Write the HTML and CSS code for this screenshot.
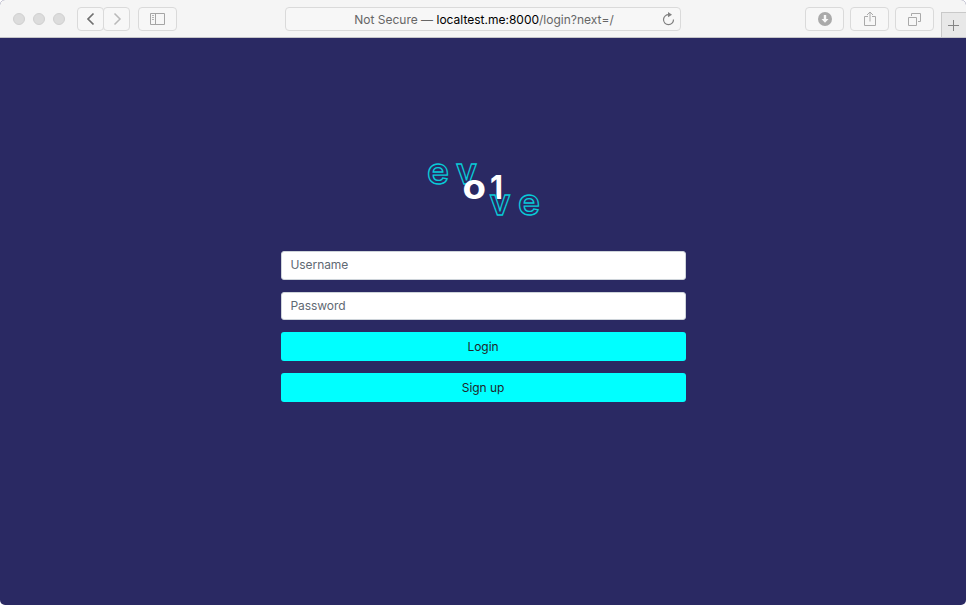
FILE: index.html
```
<!DOCTYPE html>
<html lang="en">
<head>
<meta charset="utf-8">
<title>Evolve</title>
<link rel="stylesheet" href="styles.css">
</head>
<body>
<div class="window">
  <header class="toolbar">
    <div class="lights"><i></i><i></i><i></i></div>
    <div class="nav">
      <span class="tool back"><svg width="10" height="14" viewBox="0 0 10 14"><path d="M7.500 1.500 2 7l5.500 5.500" fill="none" stroke="#707070" stroke-width="1.700"/></svg></span>
      <span class="tool forward"><svg width="10" height="14" viewBox="0 0 10 14"><path d="M2.500 1.500 8 7l-5.500 5.500" fill="none" stroke="#b9b9b9" stroke-width="1.500"/></svg></span>
    </div>
    <span class="tool sidebar"><svg width="15" height="12" viewBox="0 0 15 12" fill="none" stroke="#a5a5a5"><path d="M.5.5h14v11H.5zM5.500.5v11"/><path d="M2 2.500h2M2 4.500h2M2 6.500h2" stroke="#b5b5b5"/></svg></span>
    <div class="address">
      <span class="url">Not Secure — <b>localtest.me:8000</b>/login?next=/</span>
      <svg class="reload" width="13" height="14" viewBox="0 0 13 14"><path d="M7 2.700A5 5 0 1 0 11.500 7.500" fill="none" stroke="#808080" stroke-width="1.200"/><path d="M6 0 10 2.700 6 5.300z" fill="#808080"/></svg>
    </div>
    <div class="actions">
      <span class="tool"><svg width="14" height="14" viewBox="0 0 14 14"><circle cx="7" cy="7" r="7" fill="#aaa"/><path d="M5.800 3h2.400v4h2.300L7 10.800 3.500 7h2.300z" fill="#f8f8f8"/></svg></span>
      <span class="tool"><svg width="12" height="16" viewBox="0 0 12 16" fill="none" stroke="#aaa"><path d="M4 5.500H.5v9h11v-9H8M6 10.500V1M3 4l3-3 3 3"/></svg></span>
      <span class="tool"><svg width="13" height="13" viewBox="0 0 13 13" fill="none" stroke="#aaa"><path d="M.5 4.500h8v8h-8zM3.500 3V.5h9v8H10"/></svg></span>
    </div>
    <span class="newtab"><svg width="11" height="11" viewBox="0 0 11 11"><path d="M5.500 0v11M0 5.500h11" stroke="#858585"/></svg></span>
  </header>
  <main class="page">
    <svg class="logo" width="114" height="54" viewBox="427 163 114 54" role="img" aria-label="evolve">
      <g class="outline">
        <text x="427" y="183.500" textLength="22" lengthAdjust="spacingAndGlyphs">e</text>
        <text x="456" y="183.500" textLength="21" lengthAdjust="spacingAndGlyphs">v</text>
      </g>
      <g class="solid">
        <text x="462.500" y="199.300" textLength="23.500" lengthAdjust="spacingAndGlyphs">o</text>
        <text class="one" x="490" y="199" textLength="13" lengthAdjust="spacingAndGlyphs">1</text>
      </g>
      <g class="outline">
        <text x="489.500" y="214.500" textLength="21" lengthAdjust="spacingAndGlyphs">v</text>
        <text x="518" y="214.500" textLength="22" lengthAdjust="spacingAndGlyphs">e</text>
      </g>
    </svg>
    <form class="login">
      <input class="username" type="text" placeholder="Username">
      <input class="password" type="password" placeholder="Password">
      <button type="button">Login</button>
      <button type="button">Sign up</button>
    </form>
  </main>
</div>
</body>
</html>
```
FILE: styles.css
```
* { box-sizing: border-box; }
body { margin: 0; background: #fff; font-family: Inter, "Liberation Sans", sans-serif; }
svg { display: block; }
.window { display: flex; flex-direction: column; height: 605px; border-radius: 5px; overflow: hidden; background: #2a2963; }
.toolbar { display: flex; height: 38px; padding: 7px 0 0 13px; background: #f5f5f5; border-bottom: 1px solid #c4c4c8; }
.lights { display: flex; gap: 8px; margin: 6px 12px 0 0; }
.lights i { width: 12px; height: 12px; border-radius: 50%; background: #dcdcdc; border: 1px solid #d0d0d0; }
.tool { display: flex; align-items: center; justify-content: center; width: 39px; height: 24px; border: 1px solid #dadada; border-radius: 4px; background: #f7f7f7; }
.nav { display: flex; }
.nav .tool { width: 27px; }
.nav .forward { margin-left: -1px; }
.sidebar { margin-left: 8px; }
.address { position: relative; display: flex; justify-content: center; width: 396px; height: 24px; margin-left: 108px; border: 1px solid #dadada; border-radius: 4px; background: #f7f7f7; font-size: 12px; line-height: 23px; color: #666; }
.url { margin-left: 2px; }
.address b { color: #000; font-weight: 400; }
.reload { position: absolute; right: 5px; top: 4px; }
.actions { display: flex; gap: 6px; margin-left: 124px; }
.newtab { display: flex; align-items: center; justify-content: center; width: 25px; height: 25px; margin: 5px 0 0 7px; padding-right: 1px; border: solid #c9c9c9; border-width: 1px 0 0 1px; background: #e8e8e8; }
.page { display: flex; flex-direction: column; align-items: center; padding-top: 125px; }
.logo { margin-left: 2px; overflow: visible; }
.logo text { font-family: Inter, sans-serif; font-weight: 700; }
.logo .outline text { font-weight: 600; }
.outline { font-size: 36px; fill: none; stroke: #08cbd8; stroke-width: 1.3; }
.solid { font-size: 35px; fill: #fff; }
.solid .one { font-size: 33px; }
.login { display: flex; flex-direction: column; gap: 12px; width: 405px; margin: 34px 0 0 1px; }
.login input, .login button { height: 29px; margin: 0; border-radius: 3px; font: 12px/18px Inter, sans-serif; letter-spacing: -.07px; }
.login input { padding: 0 9px 1px 8.5px; border: 1px solid #ced4da; background: #fff; }
.login .username { padding-bottom: 2px; }
.login .password { height: 28px; }
.login input::placeholder { color: #5f6973; opacity: 1; }
.login button { padding: 0 1px 0 0; border: 0; background: #00ffff; color: #212529; }
```
